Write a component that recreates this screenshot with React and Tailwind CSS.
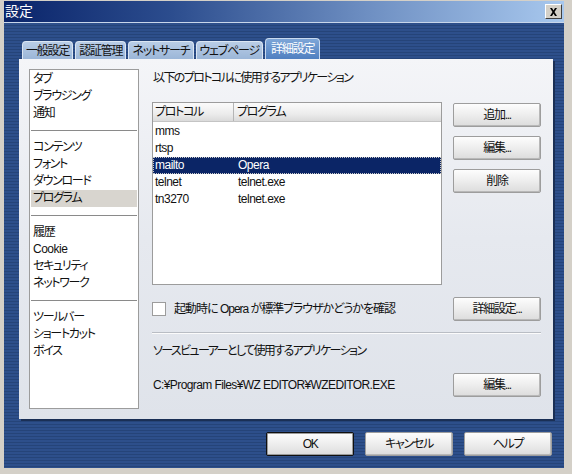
const FONT = "font-['Liberation_Sans','Noto_Sans_CJK_JP',sans-serif] [font-feature-settings:'palt'] tracking-[-1.3px]";
const LATIN = "tracking-[-0.5px]";

const TABS = ["一般設定", "認証管理", "ネットサーチ", "ウェブページ", "詳細設定"];

const SECTIONS = [
  ["タブ", "ブラウジング", "通知"],
  ["コンテンツ", "フォント", "ダウンロード", "プログラム"],
  ["履歴", "Cookie", "セキュリティ", "ネットワーク"],
  ["ツールバー", "ショートカット", "ボイス"],
];

const PROTOCOLS = [
  { name: "mms", app: "" },
  { name: "rtsp", app: "" },
  { name: "mailto", app: "Opera" },
  { name: "telnet", app: "telnet.exe" },
  { name: "tn3270", app: "telnet.exe" },
];

function Button({ children, primary, className = "" }) {
  return (
    <button
      type="button"
      className={`flex h-[24px] w-[88px] shrink-0 items-center justify-center rounded-[2px] border bg-[linear-gradient(180deg,#fdfdfd_0%,#efefef_45%,#dcdcdc_100%)] text-[12px] text-[#111] ${
        primary ? "border-[#101010] shadow-[inset_0_0_0_1px_#9a9a9a]" : "border-[#9d9d9d] shadow-[inset_-1px_-1px_0_#b8b8b8]"
      } ${className}`}
    >
      {children}
    </button>
  );
}

function Tab({ label, active }) {
  if (active) {
    return (
      <div className="flex h-[21px] items-center rounded-t-[4px] border border-b-0 border-[#c9daf0] bg-[linear-gradient(180deg,#7ea6d8_0%,#4f7fc0_100%)] px-[5px] text-[12px] tracking-[-1.2px] text-white">
        {label}
      </div>
    );
  }
  return (
    <div className="mt-[3px] flex h-[18px] items-center rounded-t-[4px] border border-b-0 border-[#dbe6f3] bg-[linear-gradient(180deg,#b9cde6_0%,#9bb6d8_100%)] px-[3px] text-[12px] tracking-[-1.2px] text-[#111]">
      {label}
    </div>
  );
}

function SideList() {
  return (
    <div className="h-[340px] w-[110px] shrink-0 border border-[#9c9c9c] bg-white p-px">
      {SECTIONS.map((items, i) => (
        <div key={i}>
          {i > 0 && (
            <div className="flex h-[17px] items-center">
              <div className="h-px w-full bg-[#8a8a8a]" />
            </div>
          )}
          {items.map((item) => (
            <div
              key={item}
              className={`h-[17px] pl-[2px] text-[12px] leading-[17px] text-[#111] ${
                item === "プログラム" ? "bg-[#d8d5cf]" : ""
              } ${item === "Cookie" ? LATIN : ""}`}
            >
              {item}
            </div>
          ))}
        </div>
      ))}
    </div>
  );
}

function ProtocolTable() {
  return (
    <div className="h-[183px] w-[290px] border border-[#9c9c9c] bg-white">
      <div className="flex h-[19px] border-b border-[#c4c4c4] bg-[linear-gradient(180deg,#fbfbfb_0%,#ececec_60%,#dadada_100%)] text-[12px] leading-[18px] text-[#111]">
        <div className="w-[81px] border-r border-[#b5b5b5] pl-[2px]">プロトコル</div>
        <div className="pl-[3px]">プログラム</div>
      </div>
      <div className={`pt-px ${LATIN}`}>
        {PROTOCOLS.map((p) => {
          const selected = p.name === "mailto";
          return (
            <div
              key={p.name}
              className={`flex h-[17px] text-[12px] leading-[15px] ${
                selected
                  ? "border border-dotted border-[#c9c9c9] bg-[#0b2566] text-white"
                  : "border border-transparent text-[#111]"
              }`}
            >
              <div className="w-[82px] pl-px">{p.name}</div>
              <div className="pl-[2px]">{p.app}</div>
            </div>
          );
        })}
      </div>
    </div>
  );
}

export default function App() {
  return (
    <div className={`${FONT} h-[474px] w-[572px] bg-[#d6d3ce]`}>
      <div className="flex h-full flex-col border-l-4 border-r-[8px] border-b-[6px] border-t border-[#d4d0c8] shadow-[inset_-2px_-2px_0_#808080]">
        {/* title bar */}
        <div className="flex h-[21px] shrink-0 items-center justify-between bg-[linear-gradient(90deg,#0a246a_0%,#2c4d8e_30%,#6e8fc2_65%,#a8c8ee_100%)] pr-[2px]">
          <span className="pl-px text-[14px] tracking-normal text-white">設定</span>
          <div className="flex h-[15px] w-[17px] items-center justify-center border border-t-white border-l-white border-r-[#404040] border-b-[#404040] bg-[#d4d0c8]">
            <svg width="9" height="8" viewBox="0 0 9 8">
              <path d="M1 0h2l1.5 2.5L6 0h2L5.5 4 8 8H6L4.5 5.5 3 8H1l2.5-4z" fill="#000" />
            </svg>
          </div>
        </div>
        <div className="h-px shrink-0 bg-[#c8d6ea]" />

        {/* dialog body */}
        <div className="flex flex-1 flex-col bg-[repeating-linear-gradient(180deg,#2d4f8b_0px,#2d4f8b_2px,#254479_2px,#254479_3px)] pl-[15px] pr-[11px] pt-[15px]">
          <div className="flex items-end gap-[2px] pl-[3px]">
            {TABS.map((t) => (
              <Tab key={t} label={t} active={t === "詳細設定"} />
            ))}
          </div>

          <div className="flex h-[360px] w-[534px] gap-[13px] bg-[linear-gradient(180deg,#f4f5f8_0%,#e6e9ef_50%,#dfe3ea_100%)] p-[10px] shadow-[2px_2px_0_#1a2f55]">
            <SideList />

            <div className="flex flex-1 flex-col pr-[2px]">
              <div className="h-[18px] pl-px pt-[2px] text-[12px] leading-[14px] tracking-[-1.6px] text-[#111]">
                以下のプロトコルに使用するアプリケーション
              </div>
              <div className="mt-[15px] flex gap-[11px]">
                <ProtocolTable />
                <div className="flex flex-col gap-[9px] pt-px">
                  <Button>追加...</Button>
                  <Button>編集...</Button>
                  <Button>削除</Button>
                </div>
              </div>

              <div className="mt-[12px] flex items-center justify-between">
                <label className="flex items-center gap-[8px] text-[12px] tracking-[-1px] text-[#111]">
                  <span className="h-[14px] w-[14px] border border-[#9c9c9c] bg-white" />
                  起動時に Opera が標準ブラウザかどうかを確認
                </label>
                <Button>詳細設定...</Button>
              </div>

              <div className="mt-[11px] h-px bg-[#b9bdc4] shadow-[0_1px_0_#fbfbfb]" />

              <div className="mt-[11px] pl-px text-[12px] leading-[14px] tracking-[-1.6px] text-[#111]">
                ソースビューアーとして使用するアプリケーション
              </div>

              <div className="mt-[15px] flex items-center justify-between">
                <span className="pl-px text-[12px] tracking-[-0.6px] text-[#111]">C:¥Program Files¥WZ EDITOR¥WZEDITOR.EXE</span>
                <Button>編集...</Button>
              </div>
            </div>
          </div>

          <div className="mt-[13px] flex justify-end gap-[11px] pr-px">
            <Button primary>OK</Button>
            <Button>キャンセル</Button>
            <Button>ヘルプ</Button>
          </div>
        </div>
      </div>
    </div>
  );
}
